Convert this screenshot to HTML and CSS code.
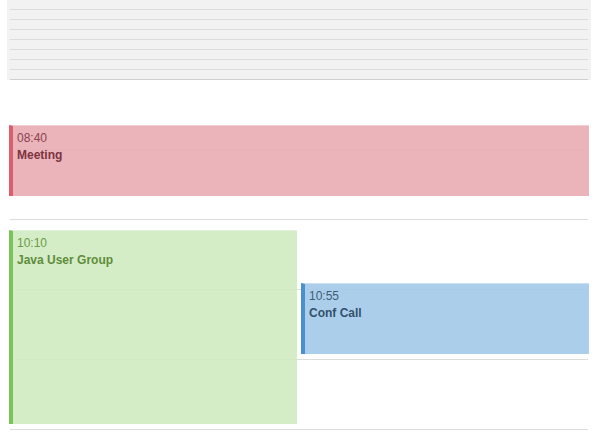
FILE: index.html
```html
<!DOCTYPE html>
<html>
<head>
<meta charset="utf-8">
<link rel="stylesheet" href="styles.css">
</head>
<body>
<div class="allday">
  <div class="slot"></div><div class="slot"></div><div class="slot"></div><div class="slot"></div>
  <div class="slot"></div><div class="slot"></div><div class="slot"></div><div class="slot last"></div>
</div>
<div class="grid">
  <div class="hour"></div>
  <div class="hour"></div>
  <div class="hour"></div>
  <div class="hour"></div>
  <div class="hour"></div>
  <div class="tail"></div>
  <div class="event red" style="top:45px;left:-1px;width:580px;height:71px">
    <div class="time">08:40</div>
    <div class="title">Meeting</div>
  </div>
  <div class="event green" style="top:150px;left:-1px;width:288px;height:194px">
    <div class="time">10:10</div>
    <div class="title">Java User Group</div>
  </div>
  <div class="event blue" style="top:203px;left:291px;width:288px;height:71px">
    <div class="time">10:55</div>
    <div class="title">Conf Call</div>
  </div>
</div>
</body>
</html>
```
FILE: styles.css
```css
html, body {
  margin: 0;
  padding: 0;
  background: #ffffff;
  font-family: "Liberation Sans", Arial, sans-serif;
  overflow: hidden;
}
.allday {
  margin: 0 0 0 7px;
  width: 584px;
  background: #f2f2f2;
  display: flex;
  flex-direction: column;
}
.slot {
  height: 9px;
  margin: 0 3px;
  border-bottom: 1px solid #dcdcdc;
}
.slot.last {
  border-bottom-color: #cfcfcf;
}
.grid {
  position: relative;
  margin-left: 10px;
  width: 578px;
}
.hour {
  height: 69px;
  border-bottom: 1px solid #dddddd;
}
.tail {
  height: 12px;
}
.event {
  position: absolute;
  box-sizing: border-box;
  border-left: 4px solid;
  border-top: 1px solid rgba(255,255,255,0.35);
  padding: 4px 4px 0 4px;
  font-size: 12px;
  line-height: 17px;
}
.title {
  font-weight: bold;
}
.red {
  background: rgba(233,171,178,0.9);
  border-left-color: #dc5d6c;
  color: #8a4450;
}
.red .title { color: #7c3440; }
.green {
  background: rgba(208,235,193,0.9);
  border-left-color: #7cc25c;
  color: #6b9a44;
}
.green .title { color: #5e8c3c; }
.blue {
  background: rgba(162,202,232,0.9);
  border-left-color: #4a8fd0;
  color: #3f5b78;
}
.blue .title { color: #34506e; }
```
